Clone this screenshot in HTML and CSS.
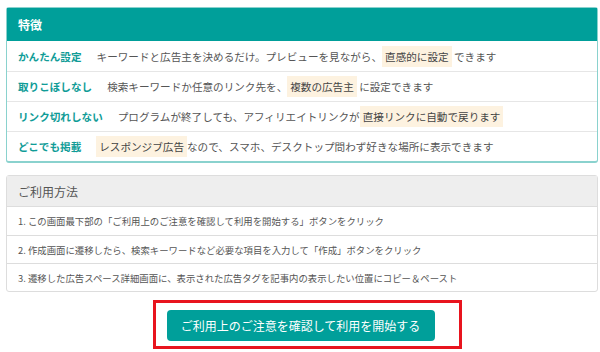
FILE: index.html
```html
<!DOCTYPE html>
<html lang="ja">
<head>
  <meta charset="UTF-8" />
  <title>ご利用方法</title>
  <link rel="stylesheet" href="styles.css">
</head>
<body>
  <div class="page">

    <div class="panel panel-feature">
      <div class="panel-heading">特徴</div>
      <ul class="feature-list">
        <li>
          <span class="label">かんたん設定</span>
          <span class="desc">キーワードと広告主を決めるだけ。プレビューを見ながら、<mark>直感的に設定</mark> できます</span>
        </li>
        <li>
          <span class="label">取りこぼしなし</span>
          <span class="desc">検索キーワードか任意のリンク先を、<mark>複数の広告主</mark> に設定できます</span>
        </li>
        <li>
          <span class="label">リンク切れしない</span>
          <span class="desc">プログラムが終了しても、アフィリエイトリンクが<mark>直接リンクに自動で戻ります</mark></span>
        </li>
        <li>
          <span class="label">どこでも掲載</span>
          <span class="desc"><mark>レスポンジブ広告</mark>なので、スマホ、デスクトップ問わず好きな場所に表示できます</span>
        </li>
      </ul>
    </div>

    <div class="panel panel-usage">
      <div class="panel-heading">ご利用方法</div>
      <ol class="usage-list">
        <li>1. この画面最下部の「ご利用上のご注意を確認して利用を開始する」ボタンをクリック</li>
        <li>2. 作成画面に遷移したら、検索キーワードなど必要な項目を入力して「作成」ボタンをクリック</li>
        <li>3. 遷移した広告スペース詳細画面に、表示された広告タグを記事内の表示したい位置にコピー＆ペースト</li>
      </ol>
    </div>

    <div class="actions">
      <div class="marker">
        <button class="btn-start">ご利用上のご注意を確認して利用を開始する</button>
      </div>
    </div>

  </div>
</body>
</html>
```

FILE: styles.css
```css
* {
  margin: 0;
  padding: 0;
  box-sizing: border-box;
}

body {
  background: #ffffff;
  font-family: "Noto Sans CJK JP", "Noto Sans", sans-serif;
  color: #555555;
}

.page {
  width: 592px;
  margin: 7px 0 0 6px;
}

.panel {
  background: #ffffff;
  border-radius: 3px;
}

.panel-feature {
  border: 1px solid #8ad2ce;
  border-bottom-width: 2px;
}

.panel-usage {
  margin-top: 12px;
  border: 1px solid #dddddd;
}

.panel-heading {
  padding-left: 11px;
  display: flex;
  align-items: center;
}

.panel-feature .panel-heading {
  height: 33px;
  background: #009f9a;
  color: #ffffff;
  font-weight: bold;
  font-size: 12px;
}

.panel-usage .panel-heading {
  height: 31px;
  background: #eeeeee;
  color: #555555;
  font-size: 12px;
  border-bottom: 1px solid #dddddd;
}

.feature-list,
.usage-list {
  list-style: none;
}

.feature-list li {
  height: 30px;
  display: flex;
  align-items: center;
  padding-left: 11px;
  font-size: 10.6px;
  border-top: 1px solid #e6e6e6;
}

.feature-list li:first-child {
  border-top: none;
}

.feature-list .label {
  color: #109c97;
  font-weight: bold;
  margin-right: 15px;
}

.feature-list mark {
  background: #fdf2e0;
  color: #444444;
  padding: 3px 3px;
}

.usage-list li {
  height: 28px;
  display: flex;
  align-items: center;
  padding-left: 11px;
  font-size: 9.4px;
  color: #555555;
  border-top: 1px solid #dddddd;
}

.usage-list li:first-child {
  border-top: none;
}

.actions {
  display: flex;
  justify-content: center;
  margin-top: 8px;
  padding-left: 10px;
}

.marker {
  border: 3px solid #e8141e;
  padding: 7px 24px 5px 11px;
}

.btn-start {
  width: 268px;
  height: 31px;
  border: none;
  border-radius: 4px;
  background: #009f9a;
  color: #ffffff;
  font-family: "Noto Sans CJK JP", sans-serif;
  font-size: 12px;
}
```
